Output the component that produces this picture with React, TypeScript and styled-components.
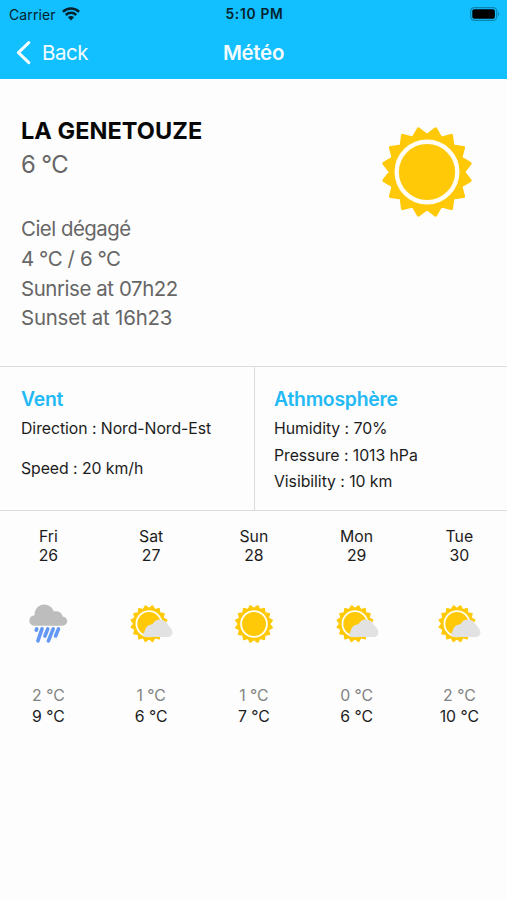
import React from 'react';
import styled, { createGlobalStyle } from 'styled-components';

const GlobalStyle = createGlobalStyle`
  * { box-sizing: border-box; }
  body {
    margin: 0;
    background: #fdfdfd;
    font-family: Inter, 'Liberation Sans', sans-serif;
    color: #1c1c1c;
  }
`;

const Screen = styled.main`
  width: 507px;
  height: 900px;
  overflow: hidden;
  background: #fdfdfd;
`;

const Header = styled.header`
  height: 79px;
  background: #12bfff;
`;

const StatusBar = styled.div`
  height: 27px;
  padding: 0 7px 0 9px;
  display: grid;
  grid-template-columns: 1fr auto 1fr;
  align-items: center;
  color: #06222d;
  font-size: 14px;
  line-height: 27px;
`;

const Carrier = styled.div`
  display: flex;
  align-items: center;
  gap: 6px;
  letter-spacing: 0.1px;
`;

const Clock = styled.div`
  padding-top: 1px;
  font-weight: 600;
  font-size: 13.8px;
  letter-spacing: 0.7px;
`;

const Battery = styled.svg`
  justify-self: end;
`;

const NavBar = styled.nav`
  height: 52px;
  padding: 0 16px;
  display: grid;
  grid-template-columns: 1fr auto 1fr;
  align-items: center;
  color: #f4fcff;
  font-size: 20.5px;
  line-height: 52px;
`;

const BackButton = styled.a`
  display: flex;
  align-items: center;
  gap: 11px;
  letter-spacing: -0.5px;
`;

const NavTitle = styled.h1`
  margin: 0;
  font-size: 20.5px;
  font-weight: 600;
  letter-spacing: -0.3px;
`;

const Current = styled.section`
  height: 287px;
  padding: 37px 33.5px 0 21px;
  display: flex;
  justify-content: space-between;
  color: #666;
`;

const City = styled.h2`
  margin: 0;
  font-size: 23.5px;
  line-height: 30px;
  font-weight: 700;
  letter-spacing: 0.05px;
  color: #080808;
`;

const Temperature = styled.p`
  margin: 2px 0 32.3px;
  font-size: 23.8px;
  line-height: 34px;
  letter-spacing: -0.6px;
`;

const Detail = styled.p<{ $tracking?: number }>`
  margin: 0;
  font-size: 20.4px;
  line-height: 29.7px;
  letter-spacing: ${(p) => p.$tracking ?? -0.4}px;
`;

const HeroSun = styled.div`
  padding-top: 9px;
`;

const Conditions = styled.section`
  display: grid;
  grid-template-columns: 255px 1fr;
  height: 145px;
  border-top: 1px solid #dcdcdc;
  border-bottom: 1px solid #dcdcdc;
`;

const Panel = styled.div<{ $divided?: boolean }>`
  padding: 18px 0 0 ${(p) => (p.$divided ? 21 : 19)}px;
  border-right: ${(p) => (p.$divided ? '1px solid #dcdcdc' : '0')};
`;

const PanelTitle = styled.h3`
  margin: 0 0 2px;
  font-size: 19.4px;
  line-height: 28px;
  font-weight: 600;
  letter-spacing: -0.25px;
  color: #23b9f4;
`;

const Reading = styled.p<{ $pitch: number; $gap?: number }>`
  margin: ${(p) => p.$gap ?? 0}px 0 0;
  font-size: 15.8px;
  line-height: ${(p) => p.$pitch}px;
  letter-spacing: -0.05px;
`;

const Readings = styled.div`
  padding-top: 1px;
`;

const Forecast = styled.section`
  display: grid;
  grid-template-columns: repeat(5, 102.75px);
  margin-left: -3px;
  padding-top: 16px;
`;

const Day = styled.article`
  display: flex;
  flex-direction: column;
  align-items: center;
  font-size: 15.8px;
  line-height: 19px;
`;

const DayIcon = styled.div`
  height: 60px;
  margin: 29px 0 31px;
  display: flex;
  align-items: center;
`;

const Low = styled.div`
  color: #828282;
  line-height: 21px;
`;

const High = styled.div`
  line-height: 21px;
`;

const SUN_POINTS = Array.from({ length: 32 }, (_, i) => {
  const angle = ((i * 11.25) * Math.PI) / 180;
  const radius = i % 2 ? 43.8 : 36.4;
  return `${(Math.sin(angle) * radius).toFixed(2)},${(-Math.cos(angle) * radius).toFixed(2)}`;
}).join(' ');

const SunShape = () => (
  <>
    <polygon points={SUN_POINTS} fill="#ffc907" stroke="#ffc907" strokeWidth="3.4" strokeLinejoin="round" />
    <circle r="30.3" fill="none" stroke="#fffdf4" strokeWidth="4.4" />
  </>
);

const Sun = ({ size }: { size: number }) => (
  <svg width={size} height={size} viewBox="-47 -47 94 94" display="block">
    <SunShape />
  </svg>
);

const PartlyCloudy = () => (
  <svg width="44" height="40" viewBox="0 0 44 40" display="block">
    <g transform="translate(20 19.7) scale(0.415)">
      <SunShape />
    </g>
    <path d="M39.5 17.5L44 15V34H42Z" fill="#fdfdfd" />
    <path
      d="M16 33C13.6 32.2 13.6 29.6 15.4 28C16.2 23.4 19 20.4 23.4 20.2C25.5 16.8 28.3 15.4 31.5 15.6C34.7 15.8 36.8 17.4 38.6 20.2C40.8 22.8 43.5 25.6 43.5 28.6C43.4 31.4 41.6 33 39.2 33Z"
      fill="#e2e2e2"
    />
  </svg>
);

const Rain = () => (
  <svg width="40" height="40" viewBox="0 0 40 40" display="block">
    <path
      d="M6.6 21.8A5.3 5.3 0 0 1 6.6 11.2C6.2 5.2 10.8 0.5 16.2 0.5C20.8 0.5 24.6 3.4 25.8 7.6C30.2 6.4 33.8 8.9 34.6 12.4C37.4 12.6 39.2 14.6 39.2 17.1C39.2 19.8 37.2 21.8 34.6 21.8Z"
      fill="#bdbdbd"
    />
    <g stroke="#6498f5" strokeWidth="3.6" strokeLinecap="round">
      <path d="M8.8 24.8L8.2 26.2M14 24.8L9.9 36.8M19.8 24.8L16.9 32M25.2 24.8L20.4 36.8M30.5 24.8L27.6 32" />
    </g>
  </svg>
);

type Sky = 'rain' | 'partly' | 'sun';

const DAYS: { name: string; date: number; sky: Sky; low: number; high: number }[] = [
  { name: 'Fri', date: 26, sky: 'rain', low: 2, high: 9 },
  { name: 'Sat', date: 27, sky: 'partly', low: 1, high: 6 },
  { name: 'Sun', date: 28, sky: 'sun', low: 1, high: 7 },
  { name: 'Mon', date: 29, sky: 'partly', low: 0, high: 6 },
  { name: 'Tue', date: 30, sky: 'partly', low: 2, high: 10 },
];

const SkyIcon = ({ sky }: { sky: Sky }) => {
  if (sky === 'rain') return <Rain />;
  if (sky === 'partly') return <PartlyCloudy />;
  return <Sun size={40} />;
};

const App = () => (
  <Screen>
    <GlobalStyle />
    <Header>
      <StatusBar>
        <Carrier>
          Carrier
          <svg width="18" height="14" viewBox="0 0 18 14">
            <g fill="none" stroke="#06222d" strokeWidth="2.5">
              <path d="M0.9 4.8A11.5 11.5 0 0 1 17.1 4.8" />
              <path d="M3.8 8A7.4 7.4 0 0 1 14.2 8" />
            </g>
            <path d="M5.9 10.2A4.4 4.4 0 0 1 12.1 10.2L9 13.4Z" fill="#06222d" />
          </svg>
        </Carrier>
        <Clock>5:10 PM</Clock>
        <Battery width="30" height="14" viewBox="0 0 30 14">
          <rect x="0.7" y="0.7" width="26" height="12.6" rx="3.6" fill="none" stroke="#0b86b3" strokeWidth="1.2" />
          <rect x="2.3" y="2.3" width="22.6" height="9.4" rx="2" fill="#000" />
          <path d="M28 4.8A2.6 2.6 0 0 1 28 9.2Z" fill="#0b86b3" />
        </Battery>
      </StatusBar>
      <NavBar>
        <BackButton>
          <svg width="15" height="24" viewBox="0 0 15 24">
            <path d="M12.8 1.6L2.4 11.6L12.8 21.6" fill="none" stroke="#f4fcff" strokeWidth="3" strokeLinecap="round" strokeLinejoin="round" />
          </svg>
          Back
        </BackButton>
        <NavTitle>Météo</NavTitle>
      </NavBar>
    </Header>
    <Current>
      <div>
        <City>LA GENETOUZE</City>
        <Temperature>6 °C</Temperature>
        <Detail $tracking={-0.5}>Ciel dégagé</Detail>
        <Detail>4 °C / 6 °C</Detail>
        <Detail>Sunrise at 07h22</Detail>
        <Detail $tracking={-0.2}>Sunset at 16h23</Detail>
      </div>
      <HeroSun>
        <Sun size={94} />
      </HeroSun>
    </Current>
    <Conditions>
      <Panel $divided>
        <PanelTitle>Vent</PanelTitle>
        <Reading $pitch={28}>Direction : Nord-Nord-Est</Reading>
        <Reading $pitch={28} $gap={12}>Speed : 20 km/h</Reading>
      </Panel>
      <Panel>
        <PanelTitle>Athmosphère</PanelTitle>
        <Readings>
          <Reading $pitch={26.5}>Humidity : 70%</Reading>
          <Reading $pitch={26.5}>Pressure : 1013 hPa</Reading>
          <Reading $pitch={26.5}>Visibility : 10 km</Reading>
        </Readings>
      </Panel>
    </Conditions>
    <Forecast>
      {DAYS.map((day) => (
        <Day key={day.name}>
          <div>{day.name}</div>
          <div>{day.date}</div>
          <DayIcon>
            <SkyIcon sky={day.sky} />
          </DayIcon>
          <Low>{day.low} °C</Low>
          <High>{day.high} °C</High>
        </Day>
      ))}
    </Forecast>
  </Screen>
);

export default App;
